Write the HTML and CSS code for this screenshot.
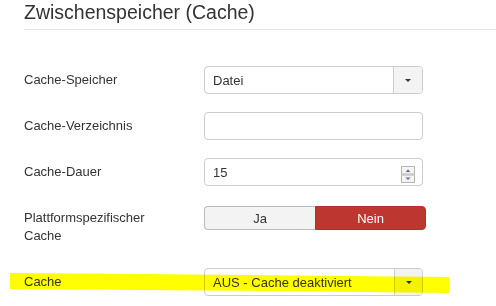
FILE: index.html
```html
<!DOCTYPE html>
<html lang="de">
<head>
    <meta charset="UTF-8">
    <meta name="viewport" content="width=device-width, initial-scale=1.0">
    <title>Zwischenspeicher (Cache)</title>
    <link rel="stylesheet" href="styles.css">
</head>
<body>
    <div class="page">
        <h2 class="legend">Zwischenspeicher (Cache)</h2>

        <div class="control-group">
            <label class="control-label">Cache-Speicher</label>
            <div class="select">
                <span class="select-value">Datei</span>
                <span class="select-arrow"><b class="caret"></b></span>
            </div>
        </div>

        <div class="control-group">
            <label class="control-label">Cache-Verzeichnis</label>
            <div class="input"></div>
        </div>

        <div class="control-group">
            <label class="control-label">Cache-Dauer</label>
            <div class="input number">
                <span class="input-value">15</span>
                <span class="spinner">
                    <svg width="14" height="17" viewBox="0 0 14 17">
                        <rect x="0.5" y="0.5" width="13" height="7.5" fill="#f4f4f4" stroke="#b5b5b5"/>
                        <rect x="0.5" y="9" width="13" height="7.5" fill="#f4f4f4" stroke="#b5b5b5"/>
                        <path d="M4.5 6 L7 3.5 L9.5 6 Z" fill="#5a6b9a"/>
                        <path d="M4.5 11.5 L7 14 L9.5 11.5 Z" fill="#5a6b9a"/>
                    </svg>
                </span>
            </div>
        </div>

        <div class="control-group top">
            <label class="control-label two-line">Plattformspezifischer Cache</label>
            <div class="toggle">
                <span class="toggle-btn">Ja</span>
                <span class="toggle-btn active">Nein</span>
            </div>
        </div>

        <div class="control-group last">
            <label class="control-label">Cache</label>
            <div class="select">
                <span class="select-value">AUS - Cache deaktiviert</span>
                <span class="select-arrow wide"><b class="caret"></b></span>
            </div>
        </div>

        <!-- highlighter stroke drawn over the last row -->
        <div class="marker"></div>
    </div>
</body>
</html>
```

FILE: styles.css
```css
body {
    margin: 0;
    background: #fff;
    font-family: "Liberation Sans", Arial, sans-serif;
    color: #333;
}
.page {
    position: relative;
    width: 496px;
    height: 306px;
    overflow: hidden;
}
.legend {
    margin: 0 0 36px 24px;
    padding: 0 0 5px 0;
    font-size: 19.5px;
    font-weight: normal;
    line-height: 24px;
    color: #333;
    border-bottom: 1px solid #e5e5e5;
}
.control-group {
    display: flex;
    align-items: center;
    margin: 0 0 18px 24px;
}
.control-group.top {
    align-items: flex-start;
    margin-top: 20px;
    margin-bottom: 23px;
}
.control-label {
    width: 180px;
    font-size: 13px;
    line-height: 18px;
}
.control-label.two-line {
    width: 150px;
    margin-top: 3px;
    margin-right: 30px;
}
.select,
.input {
    display: flex;
    align-items: center;
    width: 219px;
    height: 28px;
    box-sizing: border-box;
    border: 1px solid #ccc;
    border-radius: 4px;
    font-size: 13px;
    background: #fff;
}
.select-value,
.input-value {
    flex: 1;
    padding-left: 8px;
}
.select-arrow {
    display: flex;
    align-items: center;
    justify-content: center;
    width: 28px;
    height: 100%;
    background: #f3f3f3;
    border-left: 1px solid #ccc;
    border-radius: 0 3px 3px 0;
}
.select-arrow.wide {
    width: 27px;
}
.caret {
    width: 0;
    height: 0;
    border-left: 3px solid transparent;
    border-right: 3px solid transparent;
    border-top: 3px solid #333;
}
.spinner {
    display: flex;
    margin-right: 7px;
    margin-top: 4px;
}
.toggle {
    display: flex;
    width: 222px;
    height: 24px;
    font-size: 13px;
}
.toggle-btn {
    display: flex;
    align-items: center;
    justify-content: center;
    flex: 0 0 111px;
    box-sizing: border-box;
    background: #f3f3f3;
    border: 1px solid #bbb;
    border-right: none;
    border-radius: 4px 0 0 4px;
}
.toggle-btn.active {
    background: #bd362f;
    border: 1px solid #b1322c;
    border-radius: 0 4px 4px 0;
    color: #fff;
}
.marker {
    position: absolute;
    left: 10px;
    top: 273px;
    width: 439px;
    height: 20px;
    background: #ffff00;
    mix-blend-mode: multiply;
    clip-path: polygon(0 0, 30% 1px, 100% 4px, 100% 100%, 60% 18px, 0 16px);
}
```
